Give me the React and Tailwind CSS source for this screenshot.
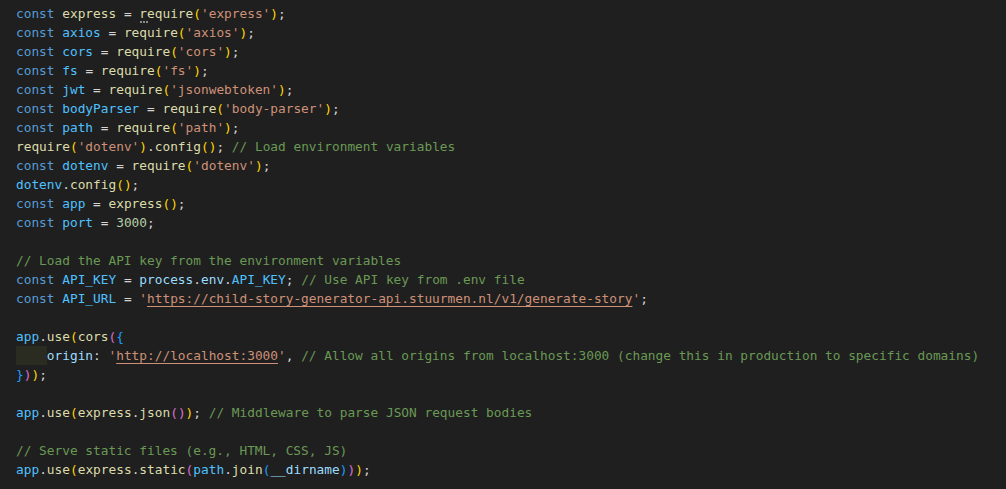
import React from 'react';

const C = {
  kw: 'text-[#569cd6]',
  cst: 'text-[#4fc1ff]',
  fn: 'text-[#dcdcaa]',
  vr: 'text-[#9cdcfe]',
  str: 'text-[#ce9178]',
  com: 'text-[#6a9955]',
  num: 'text-[#b5cea8]',
  op: 'text-[#d4d4d4]',
  b1: 'text-[#ffd700]',
  b2: 'text-[#da70d6]',
  b3: 'text-[#179fff]',
};

const req = (name, mod) => [
  ['const', 'kw'], [' '], [name, 'cst'], [' = '], ['require', 'fn'], ['(', 'b1'], [`'${mod}'`, 'str'], [')', 'b1'], [';'],
];

const lines = [
  [['const', 'kw'], [' '], ['express', 'fn'], [' = '], ['require', 'fn', 'hint'], ['(', 'b1'], ["'express'", 'str'], [')', 'b1'], [';']],
  req('axios', 'axios'),
  req('cors', 'cors'),
  req('fs', 'fs'),
  req('jwt', 'jsonwebtoken'),
  req('bodyParser', 'body-parser'),
  req('path', 'path'),
  [['require', 'fn'], ['(', 'b1'], ["'dotenv'", 'str'], [')', 'b1'], ['.'], ['config', 'fn'], ['()', 'b1'], ['; '], ['// Load environment variables', 'com']],
  req('dotenv', 'dotenv'),
  [['dotenv', 'cst'], ['.'], ['config', 'fn'], ['()', 'b1'], [';']],
  [['const', 'kw'], [' '], ['app', 'cst'], [' = '], ['express', 'fn'], ['()', 'b1'], [';']],
  [['const', 'kw'], [' '], ['port', 'cst'], [' = '], ['3000', 'num'], [';']],
  [],
  [['// Load the API key from the environment variables', 'com']],
  [['const', 'kw'], [' '], ['API_KEY', 'cst'], [' = '], ['process', 'vr'], ['.'], ['env', 'vr'], ['.'], ['API_KEY', 'cst'], ['; '], ['// Use API key from .env file', 'com']],
  [['const', 'kw'], [' '], ['API_URL', 'cst'], [' = '], ["'", 'str'], ['https://child-story-generator-api.stuurmen.nl/v1/generate-story', 'str', 'link'], ["'", 'str'], [';']],
  [],
  [['app', 'cst'], ['.'], ['use', 'fn'], ['(', 'b1'], ['cors', 'fn'], ['(', 'b2'], ['{', 'b3']],
  [['    ', null, 'indent'], ['origin', 'vr'], [': '], ["'", 'str'], ['http://localhost:3000', 'str', 'link'], ["'", 'str'], [', '], ['// Allow all origins from localhost:3000 (change this in production to specific domains)', 'com']],
  [['}', 'b3'], [')', 'b2'], [')', 'b1'], [';']],
  [],
  [['app', 'cst'], ['.'], ['use', 'fn'], ['(', 'b1'], ['express', 'fn'], ['.'], ['json', 'fn'], ['()', 'b2'], [')', 'b1'], ['; '], ['// Middleware to parse JSON request bodies', 'com']],
  [],
  [['// Serve static files (e.g., HTML, CSS, JS)', 'com']],
  [['app', 'cst'], ['.'], ['use', 'fn'], ['(', 'b1'], ['express', 'fn'], ['.'], ['static', 'fn'], ['(', 'b2'], ['path', 'cst'], ['.'], ['join', 'fn'], ['(', 'b3'], ['__dirname', 'vr'], [')', 'b3'], [')', 'b2'], [')', 'b1'], [';']],
];

const Token = ({ text, kind, extra }) => {
  const color = kind ? C[kind] : C.op;
  if (extra === 'indent') {
    return <span className="inline-block bg-[#2a2b21] h-[19px] align-top">{text}</span>;
  }
  if (extra === 'link') {
    return <span className={`${color} underline decoration-[#ce9178] underline-offset-[3px]`}>{text}</span>;
  }
  if (extra === 'hint') {
    return (
      <span className={`${color} relative`}>
        {text}
        <span className="absolute left-[1px] top-[15px] w-[8px] border-b-2 border-dotted border-[#8a8a8a]" />
      </span>
    );
  }
  return <span className={color}>{text}</span>;
};

export default function App() {
  return (
    <div className="w-[1006px] h-[489px] overflow-hidden bg-[#1f1f1f] pt-[3.5px] pl-4 font-['DejaVu_Sans_Mono',monospace] text-[12.8px] leading-[19px]">
      {lines.map((line, i) => (
        <div key={i} className="h-[19px] whitespace-pre">
          {line.map(([text, kind, extra], j) => (
            <Token key={j} text={text} kind={kind} extra={extra} />
          ))}
        </div>
      ))}
    </div>
  );
}
